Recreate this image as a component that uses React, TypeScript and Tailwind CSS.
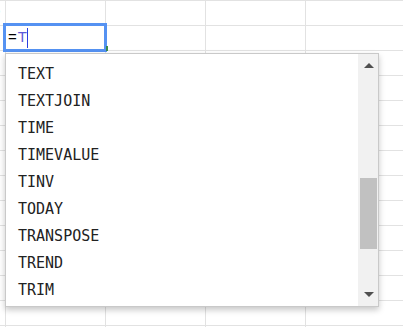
const functions = [
  'TEXT',
  'TEXTJOIN',
  'TIME',
  'TIMEVALUE',
  'TINV',
  'TODAY',
  'TRANSPOSE',
  'TREND',
  'TRIM',
];

const rows = Array.from({ length: 14 }, (_, i) => i);
const cols = [0, 1, 2, 3];

export default function App() {
  return (
    <div className="relative w-[403px] h-[327px] overflow-hidden bg-white font-['Liberation_Sans',Arial,sans-serif]">
      {/* sheet grid */}
      <div className="flex flex-col border-t border-[#e2e2e2]">
        {rows.map((r) => (
          <div key={r} className="flex h-[25px] shrink-0 border-b border-[#e2e2e2]">
            <div className="w-[6px] shrink-0 border-r border-[#e2e2e2] relative overflow-hidden">
              {r === 0 && (
                <span className="absolute -left-[6px] top-[4px] text-[11px] leading-none text-[#555]">3</span>
              )}
            </div>
            {cols.map((c) => (
              <div key={c} className="w-[100px] shrink-0 border-r border-[#e2e2e2]" />
            ))}
          </div>
        ))}
      </div>

      {/* active cell editor */}
      <div className="absolute left-[3px] top-[23px] w-[104px] h-[29px] border-[3px] border-[#5592f2] bg-white flex items-center pl-[2px] text-[15px] text-black">
        <span>=</span>
        <span className="text-[#5d5ad8] ml-[1px]">T</span>
        <span className="w-px h-[20px] bg-[#2a3fe0]" />
      </div>
      <div className="absolute left-[106px] top-[46px] w-[2px] h-[5px] bg-[#3a8a4a]" />

      {/* autocomplete dropdown */}
      <div className="absolute left-[5px] top-[53px] w-[374px] h-[254px] bg-white border border-[#c9c9c9] shadow-[0_3px_6px_rgba(0,0,0,0.22)] flex">
        <ul className="flex-1 pt-[7px] font-['DejaVu_Sans_Mono',monospace] text-[15px] text-[#222]">
          {functions.map((f) => (
            <li key={f} className="h-[27px] flex items-center pl-3">
              {f}
            </li>
          ))}
        </ul>
        <div className="w-[20px] bg-[#f1f1f1] flex flex-col justify-between">
          <div className="flex flex-col">
            <div className="h-[17px] flex items-end justify-center pl-[1px]">
              <svg width="10" height="5" viewBox="0 0 10 5" className="mb-[3px]">
                <path d="M0 5 L5 0 L10 5 Z" fill="#505050" />
              </svg>
            </div>
            <div className="mt-[107px] ml-[2px] w-[17px] h-[71px] bg-[#c1c1c1]" />
          </div>
          <div className="h-[17px] flex items-start justify-center pl-[1px]">
            <svg width="10" height="5" viewBox="0 0 10 5" className="mt-[3px]">
              <path d="M0 0 L10 0 L5 5 Z" fill="#505050" />
            </svg>
          </div>
        </div>
      </div>
    </div>
  );
}
